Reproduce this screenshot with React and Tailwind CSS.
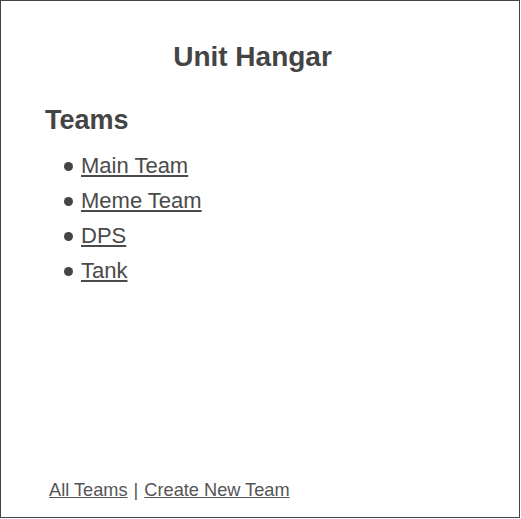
import React from "react";

const teams = ["Main Team", "Meme Team", "DPS", "Tank"];

const App = () => {
  return (
    <div
      className="w-[520px] h-[518px] border border-[#444] bg-white text-[#444] flex flex-col"
      style={{ fontFamily: '"Liberation Sans", Arial, sans-serif' }}
    >
      <h1 className="pt-[40px] pr-[15px] text-center text-[28px] leading-[32px] font-bold">
        Unit Hangar
      </h1>

      <h2 className="mt-[32px] pl-[44px] text-[27px] leading-[31px] font-bold">Teams</h2>

      <ul className="mt-[12px] pl-[63px]">
        {teams.map((team) => (
          <li key={team} className="flex items-center text-[22px] leading-[35px]">
            <span className="w-[9px] h-[9px] rounded-full bg-[#444] mr-[8px] mt-[1px]" />
            <a href="#" className="underline text-[#4a4a4a]">
              {team}
            </a>
          </li>
        ))}
      </ul>

      <div className="mt-auto mb-[16px] pl-[48px] text-[18.2px] leading-[21px] text-[#555]">
        <a href="#" className="underline">All Teams</a>
        <span className="mx-[1px]"> | </span>
        <a href="#" className="underline">Create New Team</a>
      </div>
    </div>
  );
};

export default App;
